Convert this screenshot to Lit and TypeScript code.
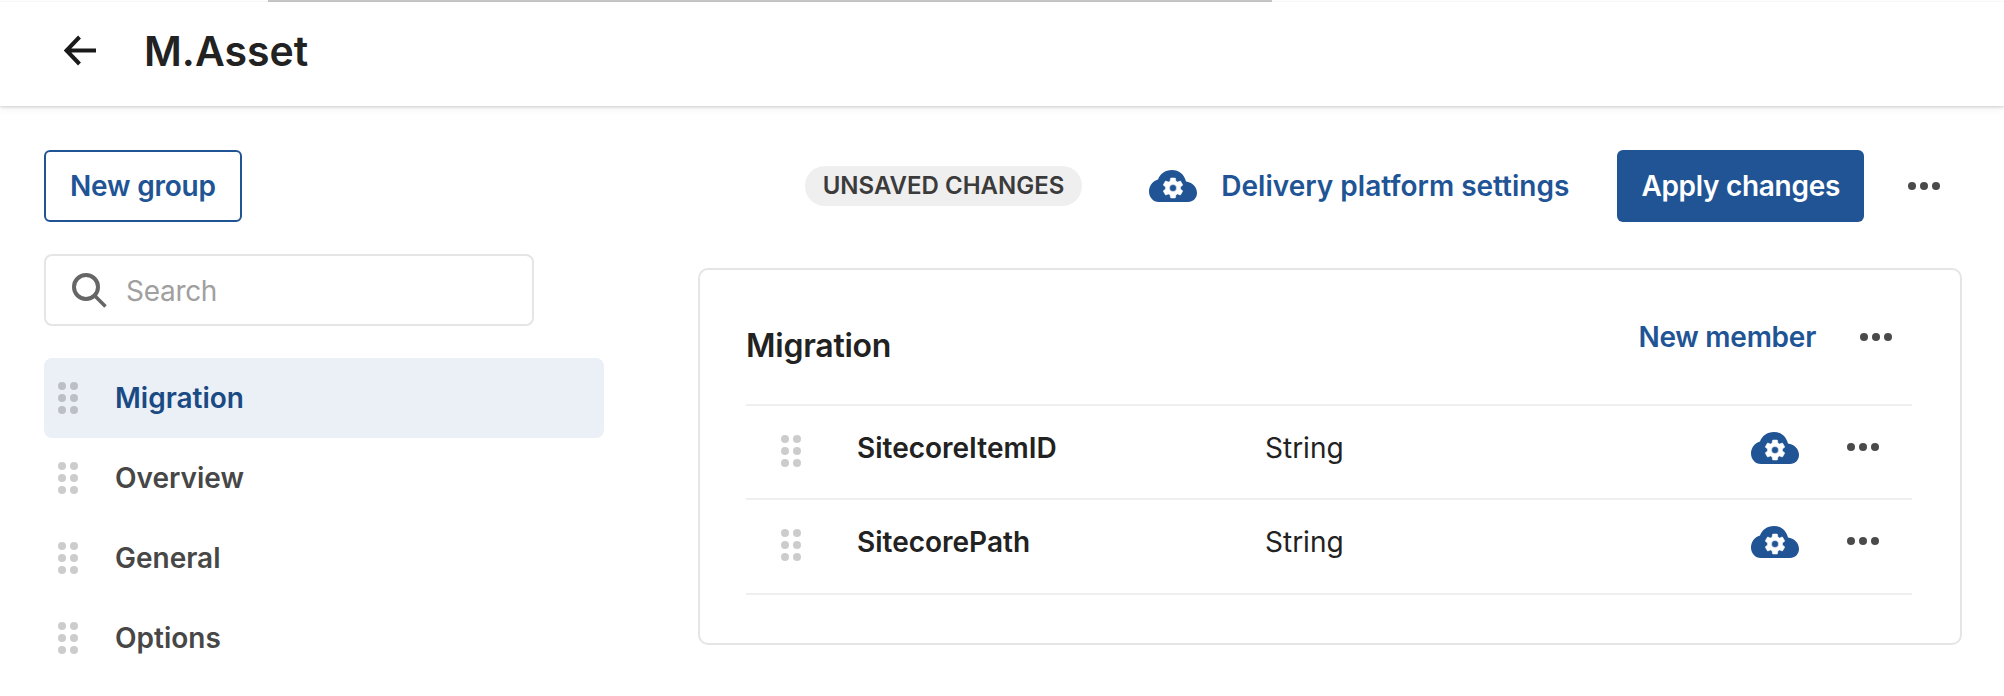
import { LitElement, html, css, svg } from "lit";
import { customElement } from "lit/decorators.js";

const COG = "M12,15.5A3.5,3.5 0 0,1 8.5,12A3.5,3.5 0 0,1 12,8.5A3.5,3.5 0 0,1 15.5,12A3.5,3.5 0 0,1 12,15.5M19.43,12.97C19.47,12.65 19.5,12.33 19.5,12C19.5,11.67 19.47,11.34 19.43,11L21.54,9.37C21.73,9.22 21.78,8.95 21.66,8.73L19.66,5.27C19.54,5.05 19.27,4.96 19.05,5.05L16.56,6.05C16.04,5.66 15.5,5.32 14.87,5.07L14.5,2.42C14.46,2.18 14.25,2 14,2H10C9.75,2 9.54,2.18 9.5,2.42L9.13,5.07C8.5,5.32 7.96,5.66 7.44,6.05L4.95,5.05C4.73,4.96 4.46,5.05 4.34,5.27L2.34,8.73C2.21,8.95 2.27,9.22 2.46,9.37L4.57,11C4.53,11.34 4.5,11.67 4.5,12C4.5,12.33 4.53,12.65 4.57,12.97L2.46,14.63C2.27,14.78 2.21,15.05 2.34,15.27L4.34,18.73C4.46,18.95 4.73,19.03 4.95,18.95L7.44,17.94C7.96,18.34 8.5,18.68 9.13,18.93L9.5,21.58C9.54,21.82 9.75,22 10,22H14C14.25,22 14.46,21.82 14.5,21.58L14.87,18.93C15.5,18.67 16.04,18.34 16.56,17.94L19.05,18.95C19.27,19.03 19.54,18.95 19.66,18.73L21.66,15.27C21.78,15.05 21.73,14.78 21.54,14.63L19.43,12.97Z";

const cloud = () => html`<svg class="cloud" width="48" height="32" viewBox="0 0 48 32">
  <path fill="#215495" d="M10 32C4 32 0 27 0 21.5C0 16 3.5 11 9 9.5C11 4 16 0 23 0C30 0 35 4 37 11.5C43 12 48 17 48 23C48 28 44 32 39 32Z"/>
  <path fill="#fff" stroke="#fff" stroke-width="0.5" transform="translate(12 6)" d="${COG}"/>
</svg>`;

const more = () => html`<svg class="more" width="32" height="8" viewBox="0 0 32 8">
  <circle cx="4" cy="4" r="4"/><circle cx="16" cy="4" r="4"/><circle cx="28" cy="4" r="4"/>
</svg>`;

const grip = () => html`<svg class="grip" width="20" height="32" viewBox="0 0 20 32">
  ${[4, 16].map((x) => [4, 16, 28].map((y) => svg`<circle cx="${x}" cy="${y}" r="4"/>`))}
</svg>`;

@customElement("app-root")
export class AppRoot extends LitElement {
  static styles = css`
    :host {
      display: block;
      width: 2004px;
      height: 696px;
      overflow: hidden;
      background: #fff;
      font-family: Inter, "Liberation Sans", sans-serif;
      color: #222;
      font-size: 28px;
      line-height: 40px;
    }
    * { box-sizing: border-box; }
    .sliver { width: 1004px; height: 2px; margin-left: 268px; background: #c8c8c8; }
    .header {
      height: 104px;
      display: flex;
      align-items: center;
      padding: 0 0 7px 64px;
      background: #fff;
      box-shadow: 0 1px 3px rgba(0,0,0,0.18), 0 4px 8px rgba(0,0,0,0.04);
      gap: 48px;
    }
    .header h1 { margin: 0; font-size: 41px; line-height: 56px; font-weight: 600; color: #222; }
    .body { display: flex; padding: 44px 42px 0 44px; gap: 94px; }
    .side { width: 560px; flex: none; display: flex; flex-direction: column; align-items: flex-start; }
    .btn-outline {
      height: 72px; padding: 0 24px;
      display: flex; align-items: center;
      border: 2px solid #215495; border-radius: 6px;
      color: #215495; font-weight: 600; letter-spacing: -0.2px;
    }
    .search {
      margin-top: 32px; width: 490px; height: 72px;
      display: flex; align-items: center; gap: 19px;
      padding: 0 0 0 26px;
      border: 2px solid #e5e5e5; border-radius: 8px;
      color: #a0a0a0; letter-spacing: -0.3px;
    }
    .search span { position: relative; top: 1px; }
    .nav { margin-top: 32px; width: 100%; display: flex; flex-direction: column; }
    .nav-item {
      height: 80px; display: flex; align-items: center; gap: 37px;
      padding: 0 0 0 14px; border-radius: 8px;
      color: #474747; font-weight: 600;
    }
    .nav-item.active { background: #ebf0f7; color: #1a4a84; }
    .grip { fill: rgba(0,0,0,0.2); flex: none; display: block; }
    .more { fill: #4a4a4a; display: block; flex: none; }
    .cloud { display: block; flex: none; }
    .main { flex: 1; min-width: 0; }
    .toolbar { height: 72px; display: flex; align-items: center; justify-content: flex-end; padding-right: 22px; }
    .pill {
      height: 40px; padding: 0 18px; border-radius: 20px; background: #efefef;
      display: flex; align-items: center;
      font-size: 24px; font-weight: 600; color: #3b3b3b;
      margin-right: 67px;
    }
    .link { color: #215495; font-weight: 600; }
    .delivery { display: flex; align-items: center; gap: 24px; margin-right: 48px; }
    .apply {
      height: 72px; padding: 0 24px; display: flex; align-items: center;
      background: #215495; color: #fff; font-weight: 600; border-radius: 6px;
      margin-right: 44px; letter-spacing: -0.3px;
    }
    .card {
      margin-top: 46px; height: 377px;
      border: 2px solid #e5e5e5; border-radius: 10px;
      padding: 0 48px 0 46px;
    }
    .card-head { height: 134px; display: flex; padding-top: 47px; }
    .card-head h2 { margin: 5px 0 0; font-size: 32px; line-height: 48px; font-weight: 600; color: #222; flex: 1; letter-spacing: -0.25px; }
    .card-head .link { margin-right: 44px; letter-spacing: -0.25px; }
    .card-head .more { margin: 16px 20px 0 0; }
    .row {
      height: 94px; border-top: 2px solid #efefef;
      display: flex; align-items: center;
      padding: 0 33px 8px 35px;
    }
    .row:last-child { height: 97px; border-bottom: 2px solid #efefef; padding-bottom: 9px; }
    .row .grip { margin-top: 6px; }
    .name { width: 408px; margin-left: 56px; font-weight: 600; color: #222; }
    .type { flex: 1; color: #222; }
    .row .more { margin: 0 0 2px 48px; }
  `;

  render() {
    const nav = ["Migration", "Overview", "General", "Options"];
    const rows = ["SitecoreItemID", "SitecorePath"];
    return html`
      <div class="sliver"></div>
      <header class="header">
        <svg width="32" height="32" viewBox="0 0 32 32" fill="none" stroke="#1a1a1a" stroke-width="4">
          <path d="M32 15.5H3M15.5 2L2.5 15.5L15.5 29"/>
        </svg>
        <h1>M.Asset</h1>
      </header>
      <div class="body">
        <aside class="side">
          <div class="btn-outline">New group</div>
          <div class="search">
            <svg width="35" height="35" viewBox="0 0 35 35" fill="none" stroke="#666">
              <circle cx="14" cy="14" r="12" stroke-width="4"/>
              <path d="M22.5 22.5L33.5 33.5" stroke-width="3.5"/>
            </svg>
            <span>Search</span>
          </div>
          <nav class="nav">
            ${nav.map((n, i) => html`<div class="nav-item ${i === 0 ? "active" : ""}">${grip()}<span>${n}</span></div>`)}
          </nav>
        </aside>
        <main class="main">
          <div class="toolbar">
            <div class="pill">UNSAVED CHANGES</div>
            <div class="delivery">${cloud()}<span class="link">Delivery platform settings</span></div>
            <div class="apply">Apply changes</div>
            ${more()}
          </div>
          <section class="card">
            <div class="card-head">
              <h2>Migration</h2>
              <span class="link">New member</span>
              ${more()}
            </div>
            ${rows.map((r) => html`<div class="row">
              ${grip()}
              <div class="name">${r}</div>
              <div class="type">String</div>
              ${cloud()}
              ${more()}
            </div>`)}
          </section>
        </main>
      </div>
    `;
  }
}
